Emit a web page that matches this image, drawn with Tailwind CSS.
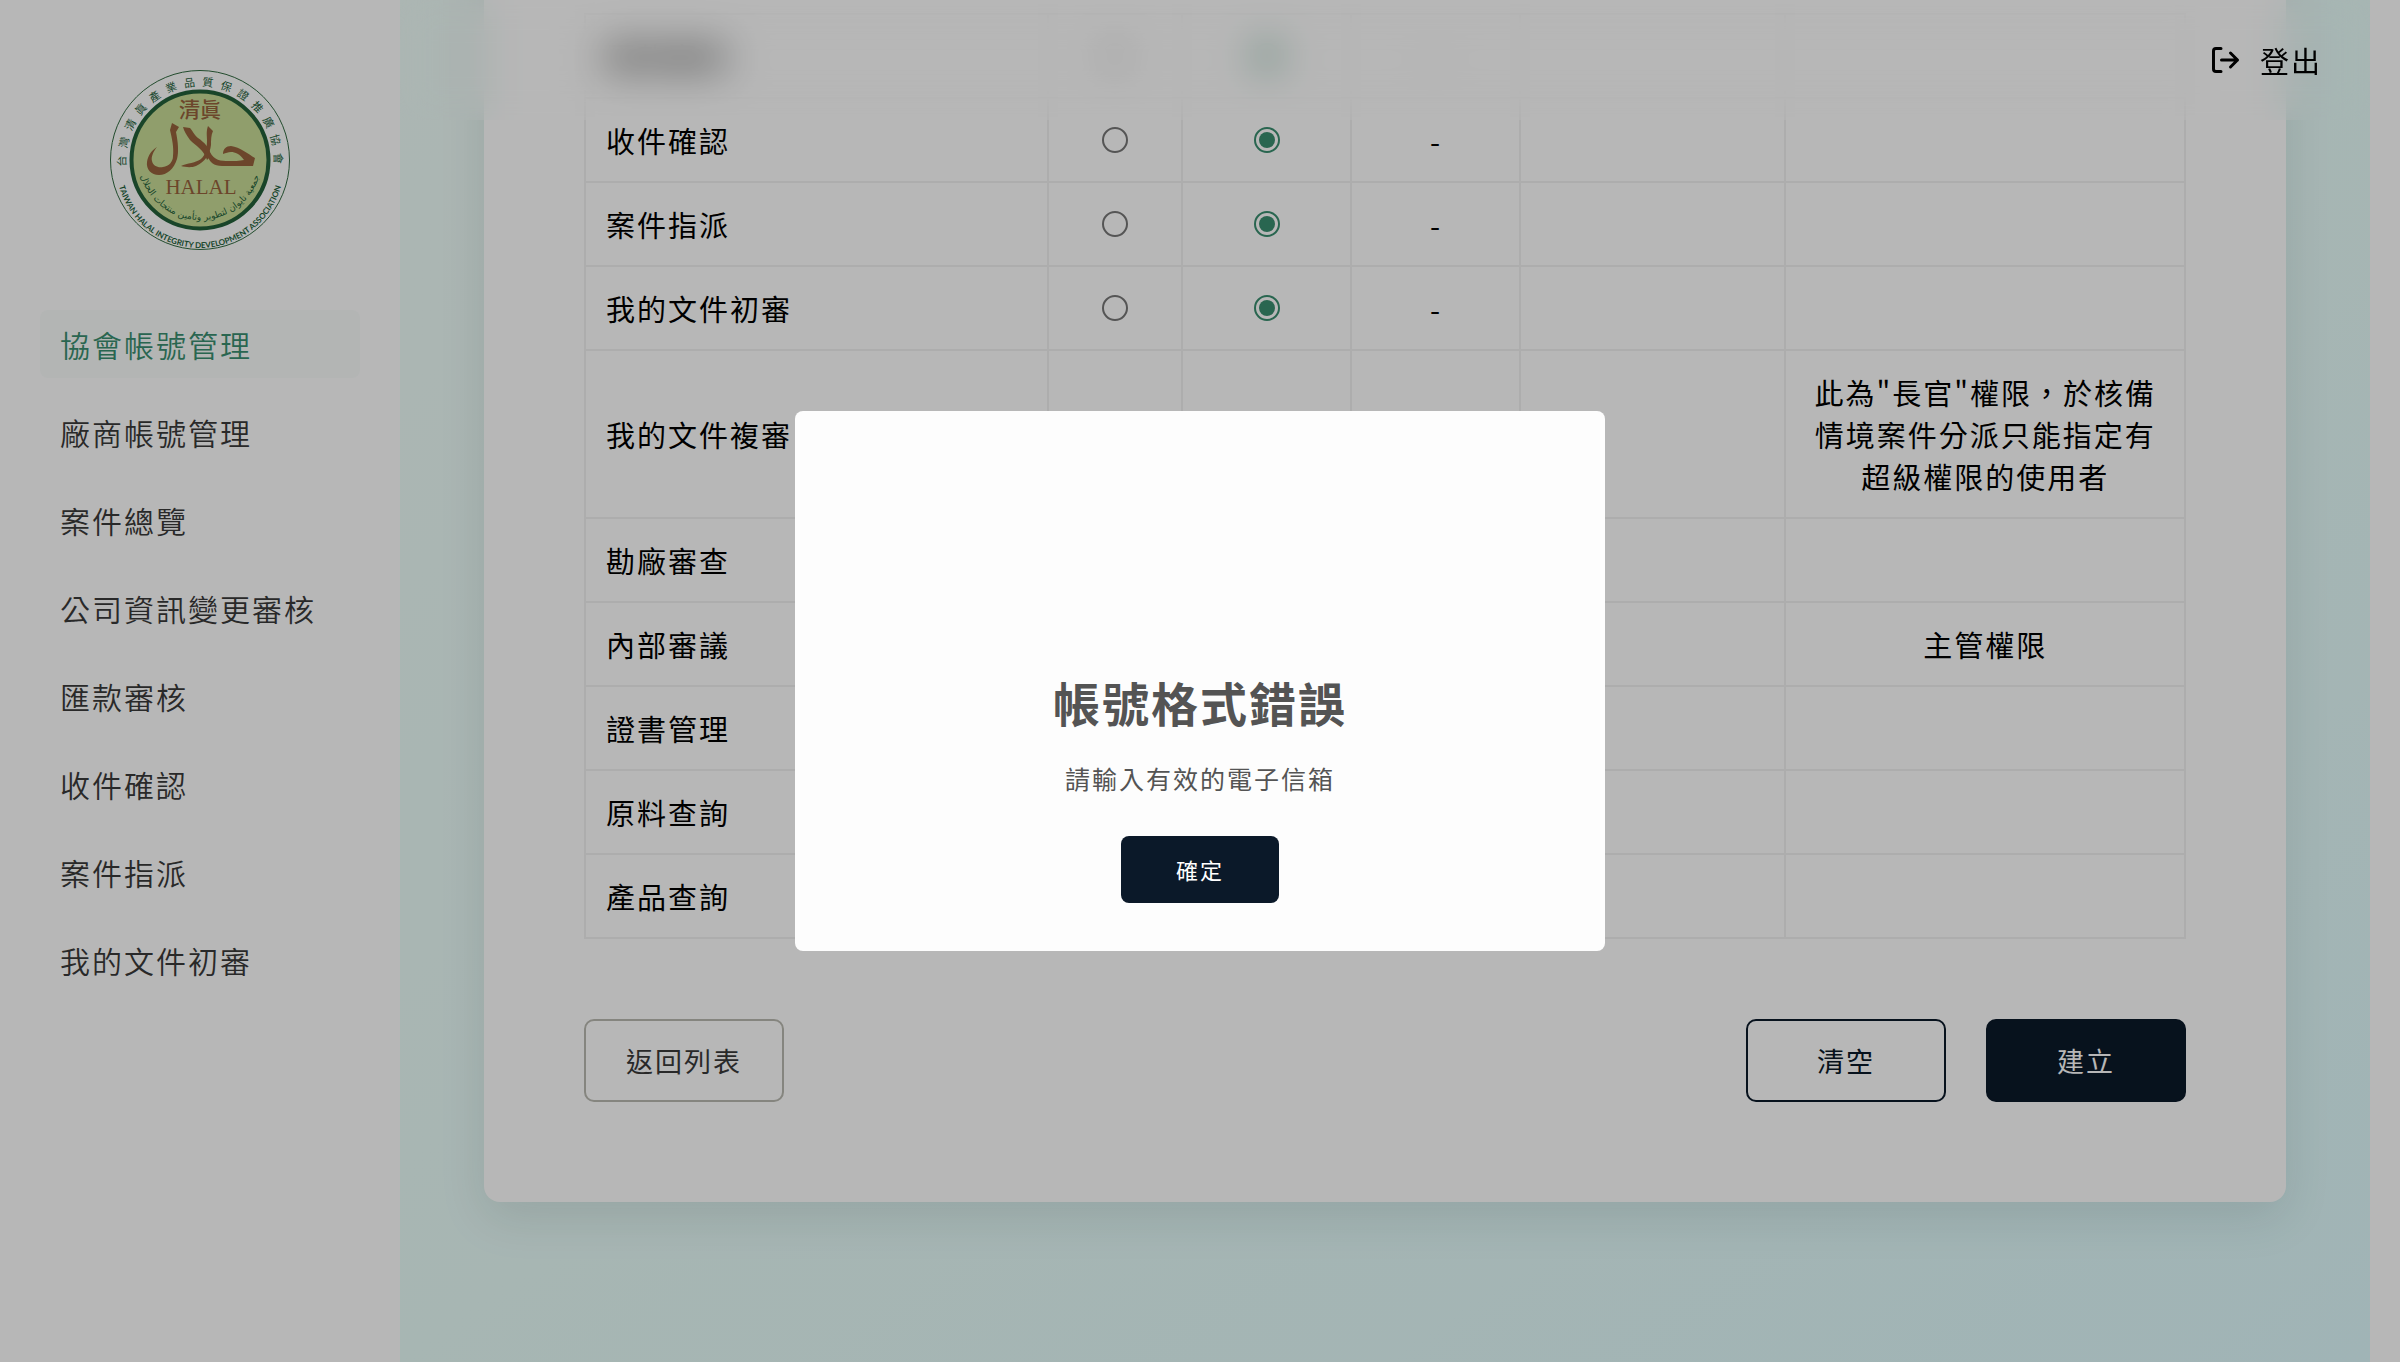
<!DOCTYPE html>
<html lang="zh-Hant">
<head>
<meta charset="utf-8">
<title>協會帳號管理</title>
<script src="https://cdn.jsdelivr.net/npm/@tailwindcss/browser@4"></script>
</head>
<body class="flex h-screen overflow-hidden bg-[#fefefe] font-['Noto_Sans_CJK_TC',sans-serif] text-[29px] leading-[42px] tracking-[2px] text-black">

<aside class="flex w-[400px] shrink-0 flex-col px-10 pt-[70px]">
  <svg class="mx-auto size-[180px] tracking-normal" viewBox="0 0 180 180" role="img" aria-label="台灣清真產業品質保證推廣協會">
    <defs>
      <path id="arcTop" d="M 16.300 96.400 A 74 74 0 1 1 163.100 101.600"/>
      <path id="arcBottom" d="M 6 94 A 84 84 0 0 0 174 94"/>
      <path id="arcInner" d="M 28 88 A 62 62 0 0 0 152 88"/>
    </defs>
    <circle cx="90" cy="90" r="89.500" fill="none" stroke="#30693f" stroke-width="1"/>
    <circle cx="90" cy="90" r="68.500" fill="#c8dc96" stroke="#23603a" stroke-width="4"/>
    <g fill="#23603a">
      <text font-size="11" font-family="Noto Sans CJK TC"><textPath href="#arcTop" startOffset="0"><tspan dx="0 6.800 6.800 6.800 6.800 6.800 6.800 6.800 6.800 6.800 6.800 6.800 6.800 6.800">台灣清眞產業品質保證推廣協會</tspan></textPath></text>
      <text font-size="8" font-weight="700" font-family="Lato" text-anchor="middle"><textPath href="#arcBottom" startOffset="50%">TAIWAN HALAL INTEGRITY DEVELOPMENT ASSOCIATION</textPath></text>
      <text font-size="9" font-family="DejaVu Sans" text-anchor="middle"><textPath href="#arcInner" startOffset="50%">جمعية تايوان لتطوير وتأمين منتجات الحلال</textPath></text>
    </g>
    <g fill="#96623c" text-anchor="middle">
      <text x="90" y="47" font-size="21" font-weight="500" font-family="Noto Sans CJK TC">清眞</text>
      <text x="91" y="124" font-size="21" font-family="Liberation Serif">HALAL</text>
      <path d="M62 53L69 57L66 62C68 72 69 82 67 89C64 99 57 105 49 105C41 105 36 99 37 92C38 85 42 80 47 77C43 82 41 87 42 91C43 96 48 98 53 97C59 96 63 92 63 86C64 77 62 69 60 60Z"/>
      <path d="M73 57L80 58C83 61 84 65 88 68C94 72 100 78 101 86L97 90C94 80 86 76 80 70C77 66 74 61 73 57Z"/>
      <path d="M98 56L103 61C101 65 101 70 101 75C100 84 95 92 86 96C81 98 75 97 71 96C77 93 86 93 91 89C96 85 97 77 97 70C97 65 96 62 98 56Z"/>
      <path d="M99 80C102 88 108 91 116 91C124 91 130 91 134 90C130 84 125 82 121 82C118 82 116 83 113 84C113 79 116 76 121 76C130 77 138 84 145 88L143 96H112C104 96 99 92 98 86Z"/>
    </g>
  </svg>
  <nav class="mt-[60px] flex flex-col gap-5 text-[30px] leading-[44px] font-[350] text-[#3a3a3a]">
    <a href="#" class="rounded-lg bg-[#f8fbfa] px-5 py-3 text-[#3a8e6f]">協會帳號管理</a>
    <a href="#" class="px-5 py-3">廠商帳號管理</a>
    <a href="#" class="px-5 py-3">案件總覽</a>
    <a href="#" class="px-5 py-3">公司資訊變更審核</a>
    <a href="#" class="px-5 py-3">匯款審核</a>
    <a href="#" class="px-5 py-3">收件確認</a>
    <a href="#" class="px-5 py-3">案件指派</a>
    <a href="#" class="px-5 py-3">我的文件初審</a>
  </nav>
</aside>

<div class="relative mr-[30px] flex min-w-0 flex-1 flex-col justify-end overflow-hidden bg-linear-to-br from-[#effcf8] via-[#e8fcf9] to-[#defafc] px-[84px] pb-40">
  <header class="absolute inset-x-0 top-0 z-10 flex h-[120px] items-center justify-end px-12">
    <!-- blur layer runs past the bar and is clipped back, so its edges stay evenly blurred -->
    <div class="absolute inset-x-0 -inset-y-20 -z-10 backdrop-blur-[20px] [clip-path:inset(80px_0)]"></div>
    <button type="button" class="flex items-center gap-5">
      <svg class="size-[30px]" viewBox="0 0 30 30" fill="none" stroke="currentColor" stroke-width="3" stroke-linecap="round" stroke-linejoin="round" aria-hidden="true"><path d="M11 3.500H6A2.500 2.500 0 0 0 3.500 6V24A2.500 2.500 0 0 0 6 26.500H11M11.500 15H27.500M20.500 8L27.500 15L20.500 22"/></svg>
      登出
    </button>
  </header>

  <main class="rounded-2xl bg-[#fefefe] p-[100px] shadow-[0_16px_48px_rgba(0,30,30,0.1)]">
    <table class="w-full table-fixed border-collapse text-center [&_td]:border-2 [&_td]:border-[#f0f0f0] [&_td]:px-5 [&_td]:py-5 [&_th]:border-2 [&_th]:border-[#f0f0f0] [&_th]:px-5 [&_th]:py-5 [&_th]:text-left [&_th]:font-normal [&_input]:mx-auto [&_input]:block [&_input]:size-[26px] [&_input]:appearance-none [&_input]:rounded-full [&_input]:border-2 [&_input]:border-[#767676] [&_input]:bg-clip-content [&_input]:p-[3px] [&_input:checked]:border-[#3a8e6f] [&_input:checked]:bg-[#3a8e6f]">
      <colgroup>
        <col class="w-[29%]"><col class="w-[134px]"><col class="w-[169px]"><col class="w-[169px]"><col class="w-[265px]"><col class="w-[25%]">
      </colgroup>
      <tbody>
        <tr><th scope="row">匯款審核</th><td><input type="radio" name="p1" aria-label="匯款審核 開啟"></td><td><input type="radio" name="p1" checked aria-label="匯款審核 關閉"></td><td>-</td><td></td><td></td></tr>
        <tr><th scope="row">收件確認</th><td><input type="radio" name="p2" aria-label="收件確認 開啟"></td><td><input type="radio" name="p2" checked aria-label="收件確認 關閉"></td><td>-</td><td></td><td></td></tr>
        <tr><th scope="row">案件指派</th><td><input type="radio" name="p3" aria-label="案件指派 開啟"></td><td><input type="radio" name="p3" checked aria-label="案件指派 關閉"></td><td>-</td><td></td><td></td></tr>
        <tr><th scope="row">我的文件初審</th><td><input type="radio" name="p4" aria-label="我的文件初審 開啟"></td><td><input type="radio" name="p4" checked aria-label="我的文件初審 關閉"></td><td>-</td><td></td><td></td></tr>
        <tr><th scope="row">我的文件複審</th><td></td><td></td><td></td><td></td><td>此為"長官"權限，於核備情境案件分派只能指定有超級權限的使用者</td></tr>
        <tr><th scope="row">勘廠審查</th><td></td><td></td><td></td><td></td><td></td></tr>
        <tr><th scope="row">內部審議</th><td></td><td></td><td></td><td></td><td>主管權限</td></tr>
        <tr><th scope="row">證書管理</th><td></td><td></td><td></td><td></td><td></td></tr>
        <tr><th scope="row">原料查詢</th><td></td><td></td><td></td><td></td><td></td></tr>
        <tr><th scope="row">產品查詢</th><td></td><td></td><td></td><td></td><td></td></tr>
      </tbody>
    </table>
    <div class="mt-20 flex gap-10 text-[27px] leading-[39px]">
      <button type="button" class="mr-auto w-[200px] rounded-[10px] border-2 border-[#b9b9b0] py-5 text-[#3a3a3a]">返回列表</button>
      <button type="button" class="w-[200px] rounded-[10px] border-2 border-[#0b1929] py-5 text-[#0b1929]">清空</button>
      <button type="button" class="w-[200px] rounded-[10px] border-2 border-[#0b1929] bg-[#0b1929] py-5 text-[#fefefe]">建立</button>
    </div>
  </main>
</div>

<div class="fixed inset-0 z-20 flex items-center justify-center bg-black/28">
  <div role="dialog" aria-modal="true" aria-labelledby="dialog-title" class="flex w-[810px] flex-col items-center rounded-lg bg-[#fdfdfd] pt-[257px] pb-12 text-[#545454]">
    <h2 id="dialog-title" class="text-[47px] leading-[68px] font-bold">帳號格式錯誤</h2>
    <p class="mt-6 text-[25px] leading-9">請輸入有效的電子信箱</p>
    <button type="button" class="mt-10 w-[158px] rounded-lg bg-[#0b1929] py-[18px] text-[22px] leading-[31px] text-white">確定</button>
  </div>
</div>
</body>
</html>
